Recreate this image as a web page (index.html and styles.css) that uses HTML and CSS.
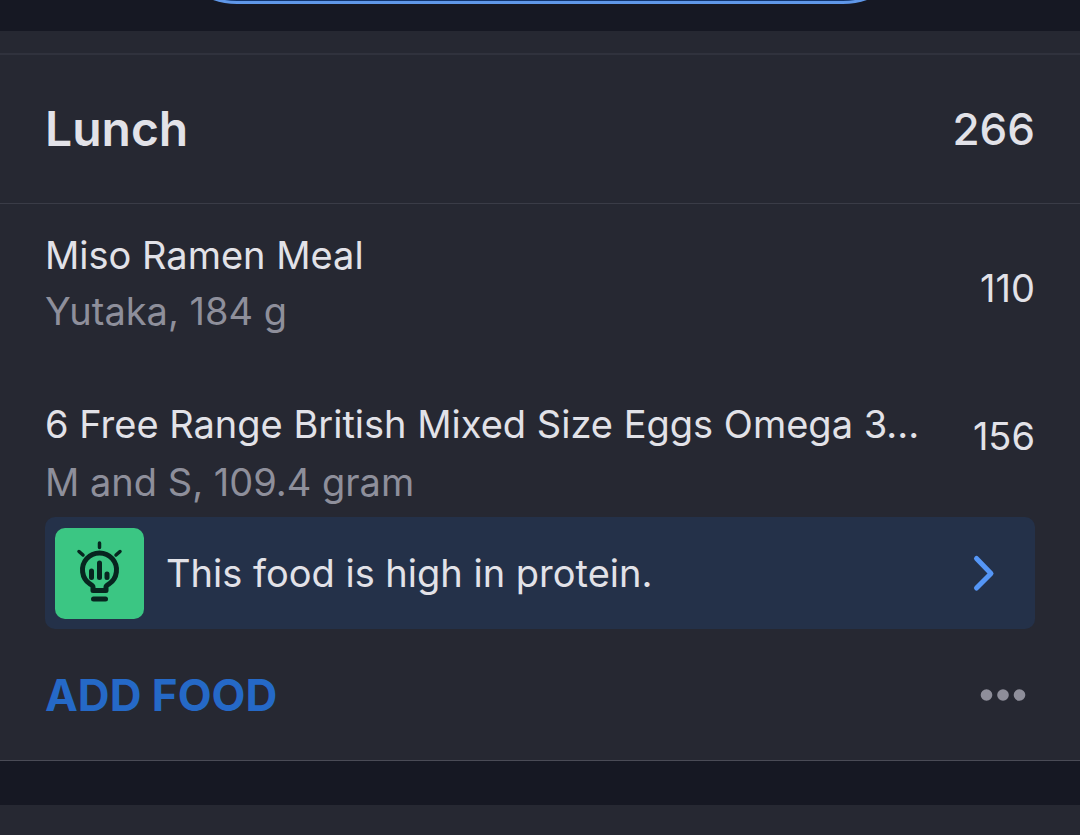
FILE: index.html
```html
<!DOCTYPE html>
<html lang="en">
  <head>
    <meta charset="UTF-8" />
    <meta name="viewport" content="width=device-width, initial-scale=1.0" />
    <title>Food Diary</title>
    <link rel="stylesheet" href="styles.css">
  </head>
  <body>
    <div class="top">
      <button class="pill" aria-label="Open"></button>
    </div>
    <div class="strip"></div>
    <section class="meal">
      <header class="meal-header">
        <h2>Lunch</h2>
        <span class="total">266</span>
      </header>
      <ul class="foods">
        <li class="food">
          <div class="info">
            <div class="name">Miso Ramen Meal</div>
            <div class="serving">Yutaka, 184 g</div>
          </div>
          <div class="calories">110</div>
        </li>
        <li class="food tipped">
          <div class="info">
            <div class="name">6 Free Range British Mixed Size Eggs Omega 3...</div>
            <div class="serving">M and S, 109.4 gram</div>
          </div>
          <div class="calories">156</div>
        </li>
      </ul>
      <a class="tip" href="#">
        <span class="tip-icon">
          <svg width="89" height="91" viewBox="0 0 89 91" fill="none" stroke="#07251f" stroke-linecap="round" stroke-linejoin="round">
            <path stroke-width="3.500" d="M44.500 15v4.500M24 23.500l4 3.500M65 23.500l-4 3.500" />
            <path stroke-width="5" d="M38 62.500v-3.500c0-1-1-2-3-3a17 17 0 1 1 19 0c-2 1-3 2-3 3v3.500z" />
            <path stroke-width="5" d="M36.500 43v6.500M44.500 35v14.500M52 46v3.500" />
            <path stroke-width="5" d="M38.500 71h12" />
          </svg>
        </span>
        <span class="tip-text">This food is high in protein.</span>
        <svg class="chevron" width="24" height="38" viewBox="0 0 24 38" fill="none" stroke="#5596f6" stroke-width="5" stroke-linecap="round" stroke-linejoin="round">
          <path d="M4.500 4.500l14.500 15L4.500 34" />
        </svg>
      </a>
      <footer class="meal-footer">
        <button class="add">ADD FOOD</button>
        <button class="more" aria-label="More">
          <svg width="46" height="12" viewBox="0 0 46 12" fill="#8e8e9a">
            <circle cx="6.500" cy="6" r="5.800" />
            <circle cx="23" cy="6" r="5.800" />
            <circle cx="39.500" cy="6" r="5.800" />
          </svg>
        </button>
      </footer>
    </section>
    <div class="gap"></div>
  </body>
</html>
```
FILE: styles.css
```css
* {
  box-sizing: border-box;
}
body {
  margin: 0;
  background-color: #262832;
  color: #e2e2e8;
  font-family: Inter, "Liberation Sans", sans-serif;
  font-size: 38px;
  line-height: 56px;
}
button {
  border: none;
  padding: 0;
  background: none;
  font-family: inherit;
  cursor: pointer;
}
.top {
  display: flex;
  flex-direction: column;
  justify-content: flex-end;
  align-items: center;
  height: 31px;
  padding-bottom: 27px;
  background-color: #161823;
  overflow: hidden;
}
.pill {
  flex-shrink: 0;
  width: 69%;
  height: 140px;
  border: 3px solid #5f97e8;
  border-radius: 70px;
  background-color: #12356f;
}
.strip {
  height: 22px;
}
.meal {
  border-top: 2px solid #30323d;
  border-bottom: 1px solid #4a4b56;
}
.meal-header {
  display: flex;
  justify-content: space-between;
  align-items: center;
  height: 149px;
  padding: 0 45px;
  border-bottom: 1px solid #3a3c47;
}
h2 {
  margin: 0;
  font-size: 48px;
  font-weight: 600;
}
.total {
  font-size: 44px;
  font-weight: 500;
}
.foods {
  margin: 0;
  padding: 0;
  list-style: none;
}
.food {
  display: flex;
  justify-content: space-between;
  align-items: flex-start;
  padding: 23px 45px 34px;
}
.info {
  white-space: nowrap;
}
.serving {
  color: #8e8f9b;
}
.calories {
  padding-top: 33px;
}
.tipped {
  padding-bottom: 7px;
}
.tipped .serving {
  padding-top: 2px;
}
.tipped .calories {
  padding-top: 12px;
}
.tip {
  display: flex;
  align-items: center;
  height: 112px;
  margin: 0 45px;
  padding: 0 39px 0 10px;
  border-radius: 10px;
  background-color: #243149;
  color: inherit;
  text-decoration: none;
}
.tip-icon {
  display: flex;
  margin-right: 22px;
  border-radius: 10px;
  background-color: #3bc683;
}
.chevron {
  margin-left: auto;
}
.meal-footer {
  display: flex;
  justify-content: space-between;
  align-items: center;
  height: 131px;
  padding: 0 54px 0 45px;
}
.add {
  color: #2569c7;
  font-size: 44px;
  font-weight: 700;
}
.more {
  display: flex;
}
.gap {
  height: 44px;
  background-color: #161823;
}
```
